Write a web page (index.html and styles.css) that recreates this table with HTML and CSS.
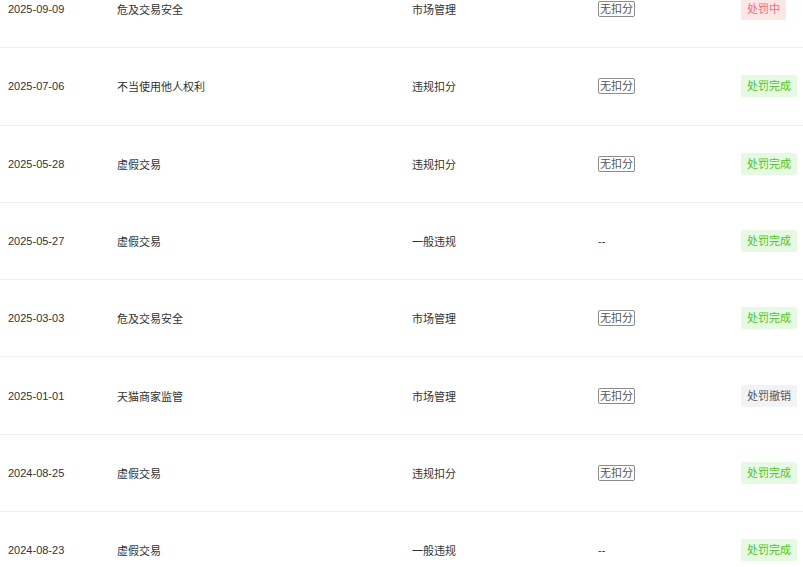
FILE: index.html
```html
<!DOCTYPE html>
<html lang="zh-CN">

<head>
    <meta charset="UTF-8">
    <meta name="viewport" content="width=device-width, initial-scale=1.0">
    <title>违规记录</title>
    <link rel="stylesheet" href="styles.css">
</head>

<body>
    <div class="record-list">
        <div class="record-row">
            <div class="cell date">2025-09-09</div>
            <div class="cell type">危及交易安全</div>
            <div class="cell category">市场管理</div>
            <div class="cell score"><span class="score-box">无扣分</span></div>
            <div class="cell status"><span class="tag tag-red">处罚中</span></div>
        </div>
        <div class="record-row">
            <div class="cell date">2025-07-06</div>
            <div class="cell type">不当使用他人权利</div>
            <div class="cell category">违规扣分</div>
            <div class="cell score"><span class="score-box">无扣分</span></div>
            <div class="cell status"><span class="tag tag-green">处罚完成</span></div>
        </div>
        <div class="record-row">
            <div class="cell date">2025-05-28</div>
            <div class="cell type">虚假交易</div>
            <div class="cell category">违规扣分</div>
            <div class="cell score"><span class="score-box">无扣分</span></div>
            <div class="cell status"><span class="tag tag-green">处罚完成</span></div>
        </div>
        <div class="record-row">
            <div class="cell date">2025-05-27</div>
            <div class="cell type">虚假交易</div>
            <div class="cell category">一般违规</div>
            <div class="cell score">--</div>
            <div class="cell status"><span class="tag tag-green">处罚完成</span></div>
        </div>
        <div class="record-row">
            <div class="cell date">2025-03-03</div>
            <div class="cell type">危及交易安全</div>
            <div class="cell category">市场管理</div>
            <div class="cell score"><span class="score-box">无扣分</span></div>
            <div class="cell status"><span class="tag tag-green">处罚完成</span></div>
        </div>
        <div class="record-row">
            <div class="cell date">2025-01-01</div>
            <div class="cell type">天猫商家监管</div>
            <div class="cell category">市场管理</div>
            <div class="cell score"><span class="score-box">无扣分</span></div>
            <div class="cell status"><span class="tag tag-grey">处罚撤销</span></div>
        </div>
        <div class="record-row">
            <div class="cell date">2024-08-25</div>
            <div class="cell type">虚假交易</div>
            <div class="cell category">违规扣分</div>
            <div class="cell score"><span class="score-box">无扣分</span></div>
            <div class="cell status"><span class="tag tag-green">处罚完成</span></div>
        </div>
        <div class="record-row">
            <div class="cell date">2024-08-23</div>
            <div class="cell type">虚假交易</div>
            <div class="cell category">一般违规</div>
            <div class="cell score">--</div>
            <div class="cell status"><span class="tag tag-green">处罚完成</span></div>
        </div>
    </div>
</body>

</html>
```

FILE: styles.css
```css
* {
    box-sizing: border-box;
    margin: 0;
    padding: 0;
}

body {
    font-family: 'Liberation Sans', 'Noto Sans CJK SC', sans-serif;
    font-size: 11px;
    color: #333;
    background: #fff;
    overflow: hidden;
}

.record-list {
    margin-top: -29px;
}

.record-row {
    display: grid;
    grid-template-columns: 109px 295px 186px 143px 1fr;
    align-items: center;
    height: 77.3px;
    border-bottom: 1px solid #f0f0f0;
}

.cell {
    padding-left: 8px;
    white-space: nowrap;
}

.score-box {
    display: inline-block;
    padding: 0 1px;
    line-height: 14px;
    border: 1px solid #8c8c8c;
    border-radius: 2px;
    color: #555;
}

.tag {
    display: inline-block;
    padding: 0 6px;
    line-height: 22px;
    border-radius: 2px;
}

.tag-green {
    background-color: #e6f9e3;
    color: #52c41a;
}

.tag-red {
    background-color: #fde6e6;
    color: #f56c6c;
}

.tag-grey {
    background-color: #f2f3f5;
    color: #555;
}
```
